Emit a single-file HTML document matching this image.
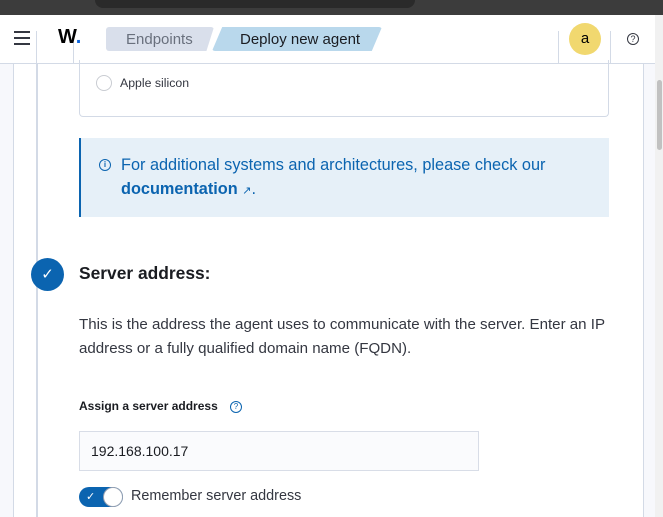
<!DOCTYPE html>
<html><head><style>
*{margin:0;padding:0;box-sizing:border-box}
body{width:663px;height:517px;overflow:hidden;font-family:"Liberation Sans",sans-serif;background:#fff;position:relative}
.abs{position:absolute}
</style></head><body>
<div class="abs" style="left:0;top:0;width:663px;height:15px;background:#3c3c3c"></div>
<div class="abs" style="left:95px;top:0;width:320px;height:8px;background:#2a2a2a;border-radius:0 0 8px 8px"></div>
<div class="abs" style="left:0;top:15px;width:655px;height:49px;background:#fff;border-bottom:1px solid #d3dae6"></div>
<div class="abs" style="left:14px;top:31px;width:16px;height:2px;background:#343741;box-shadow:0 6px 0 #343741,0 12px 0 #343741"></div>
<div class="abs" style="left:36px;top:31px;width:1px;height:33px;background:#d3dae6"></div>
<div class="abs" style="left:73px;top:31px;width:1px;height:33px;background:#d3dae6"></div>
<div class="abs" style="left:58px;top:26px;font-weight:bold;font-size:20px;color:#000">W<span style="color:#0b64dd">.</span></div>
<div class="abs" style="left:106px;top:27px;width:108px;height:24px;background:#d9dfeb;clip-path:polygon(0 0,100% 0,93% 100%,0 100%);border-radius:3px"></div>
<div class="abs" style="left:126px;top:31px;font-size:15px;color:#69707d">Endpoints</div>
<div class="abs" style="left:212px;top:27px;width:170px;height:24px;background:#b9d8ec;clip-path:polygon(6% 0,100% 0,94% 100%,0 100%);border-radius:3px"></div>
<div class="abs" style="left:240px;top:31px;font-size:15px;color:#1a1c21">Deploy new agent</div>
<div class="abs" style="left:558px;top:31px;width:1px;height:33px;background:#d3dae6"></div>
<div class="abs" style="left:610px;top:31px;width:1px;height:33px;background:#d3dae6"></div>
<div class="abs" style="left:569px;top:23px;width:32px;height:32px;border-radius:50%;background:#f1d86f;text-align:center;line-height:32px;font-size:15px;color:#000">a</div>
<div class="abs" style="left:627px;top:33px;width:12px;height:12px;border:1.3px solid #343741;border-radius:50%;font-size:9px;text-align:center;line-height:10px;color:#343741">?</div>
<div class="abs" style="left:0;top:64px;width:14px;height:453px;background:#f7f8fc;border-right:1px solid #d3dae6"></div>
<div class="abs" style="left:643px;top:64px;width:12px;height:453px;background:#f7f8fc;border-left:1px solid #d3dae6"></div>
<div class="abs" style="left:655px;top:15px;width:8px;height:502px;background:#f1f1f1"></div>
<div class="abs" style="left:657px;top:80px;width:5px;height:70px;background:#c1c1c1;border-radius:3px"></div>
<div class="abs" style="left:36px;top:64px;width:2px;height:453px;background:#d3dae6"></div>
<div class="abs" style="left:79px;top:60px;width:530px;height:57px;border:1px solid #d3dae6;border-top:none;border-radius:0 0 4px 4px"></div>
<div class="abs" style="left:96px;top:75px;width:16px;height:16px;border:1px solid #c9ccd2;border-radius:50%"></div>
<div class="abs" style="left:120px;top:76px;font-size:12.3px;color:#343741">Apple silicon</div>
<div class="abs" style="left:79px;top:138px;width:530px;height:79px;background:#e6f0f8;border-left:2px solid #0b64b0"></div>
<div class="abs" style="left:99px;top:159px;width:12px;height:12px;border:1.2px solid #0b64b0;border-radius:50%;font-size:8px;font-weight:bold;text-align:center;line-height:10px;color:#0b64b0">i</div>
<div class="abs" style="left:121px;top:153px;font-size:16.3px;color:#0b64b0;line-height:24px">For additional systems and architectures, please check our<br><b>documentation</b> <span style="font-size:11px">↗</span>.</div>
<div class="abs" style="left:31px;top:258px;width:33px;height:33px;border-radius:50%;background:#0b64b0;color:#fff;text-align:center;line-height:33px;font-size:15px">✓</div>
<div class="abs" style="left:79px;top:263px;font-size:17.4px;font-weight:bold;color:#1a1c21">Server address:</div>
<div class="abs" style="left:79px;top:313px;font-size:15.1px;color:#343741;line-height:24px">This is the address the agent uses to communicate with the server. Enter an IP<br>address or a fully qualified domain name (FQDN).</div>
<div class="abs" style="left:79px;top:399px;font-size:12px;font-weight:bold;color:#1a1c21">Assign a server address</div>
<div class="abs" style="left:230px;top:401px;width:12px;height:12px;border:1.2px solid #0b64b0;border-radius:50%;font-size:8px;text-align:center;line-height:10px;color:#0b64b0">?</div>
<div class="abs" style="left:79px;top:431px;width:400px;height:40px;background:#fafbfd;border:1px solid #d8dde7"></div>
<div class="abs" style="left:91px;top:443px;font-size:14px;color:#1a1c21">192.168.100.17</div>
<div class="abs" style="left:79px;top:487px;width:44px;height:20px;border-radius:10px;background:#0b64b0"></div>
<div class="abs" style="left:86px;top:490px;color:#fff;font-size:11px">✓</div>
<div class="abs" style="left:103px;top:487px;width:20px;height:20px;border-radius:50%;background:#fff;border:1px solid #98a2b3"></div>
<div class="abs" style="left:131px;top:488px;font-size:14.4px;color:#343741">Remember server address</div>
</body></html>
